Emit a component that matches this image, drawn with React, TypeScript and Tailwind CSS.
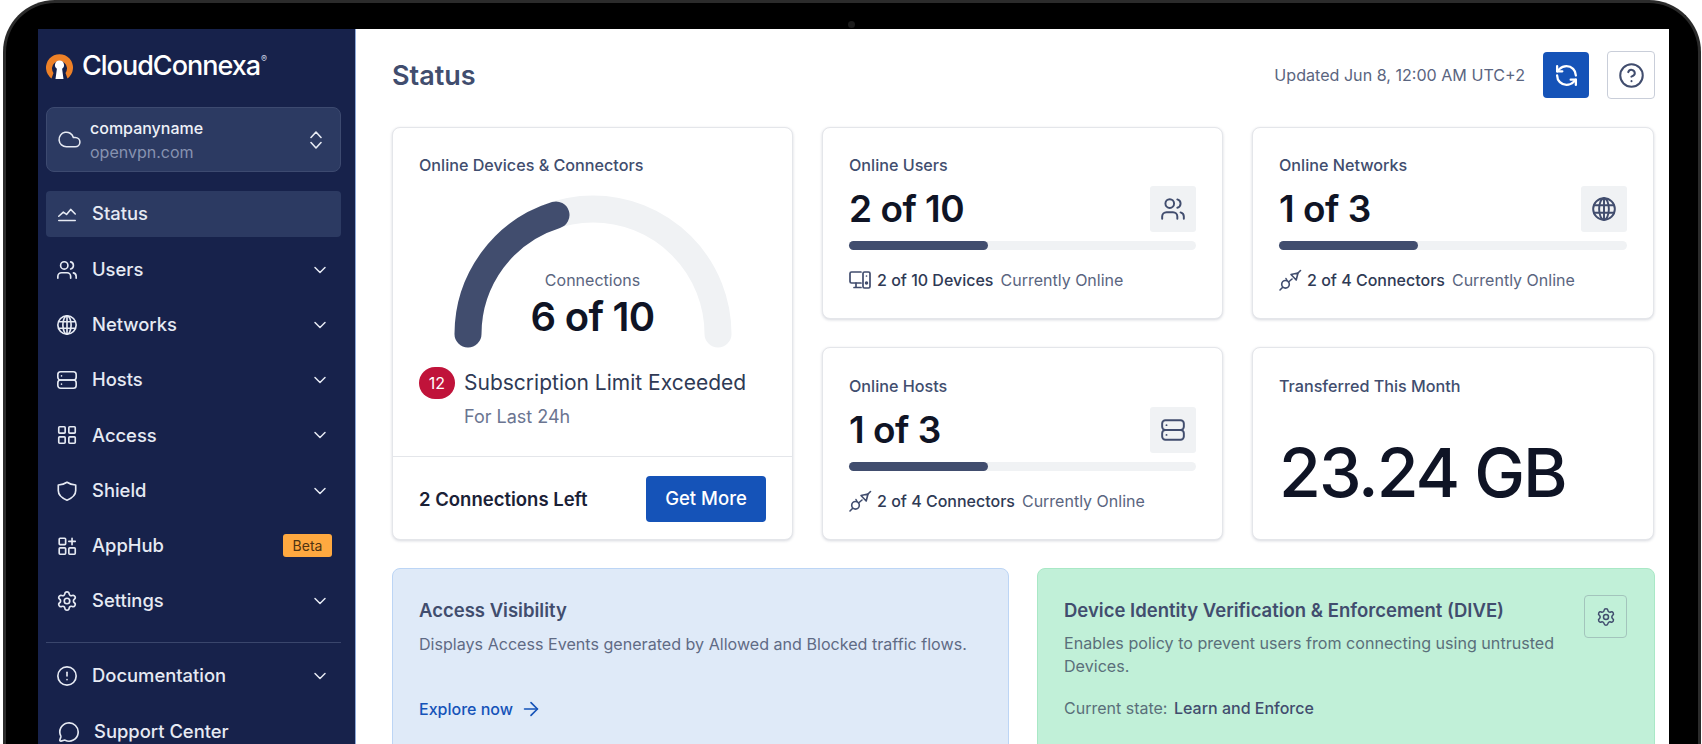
import {
  ArrowRight,
  ChevronDown,
  CircleAlert,
  CircleHelp,
  Cloud,
  LayoutGrid,
  MessageCircle,
  RefreshCcw,
  Settings,
  Users,
} from 'lucide-react';
import type { ComponentType, ReactNode } from 'react';

type IconProps = { size?: number; strokeWidth?: number; className?: string };

function StatusIcon({ size = 24, className }: IconProps) {
  return (
    <svg width={size} height={size} viewBox="0 0 24 24" fill="none" stroke="currentColor" strokeWidth={1.7} strokeLinecap="round" strokeLinejoin="round" className={className}>
      <path d="M3 14.5 8 10l3.5 2.5L16 7l5 5" />
      <path d="M3 19h18" />
    </svg>
  );
}

function AppHubIcon({ size = 24, className }: IconProps) {
  return (
    <svg width={size} height={size} viewBox="0 0 24 24" fill="none" stroke="currentColor" strokeWidth={1.8} strokeLinecap="round" strokeLinejoin="round" className={className}>
      <rect x="3.5" y="3.5" width="7" height="7" rx="1" />
      <rect x="3.5" y="14" width="7" height="7" rx="1" />
      <rect x="14" y="14" width="7" height="7" rx="1" />
      <path d="M17.5 3.5v7M14 7h7" />
    </svg>
  );
}

function HostsIcon({ size = 24, strokeWidth = 1.8, className }: IconProps) {
  return (
    <svg width={size} height={size} viewBox="0 0 24 24" fill="none" stroke="currentColor" strokeWidth={strokeWidth} strokeLinecap="round" strokeLinejoin="round" className={className}>
      <rect x="2" y="3" width="20" height="9" rx="3" />
      <rect x="2" y="12" width="20" height="9" rx="3" />
      <path d="M6 7.500h.01M6 16.500h.01" />
    </svg>
  );
}

function GlobeIcon({ size = 24, strokeWidth = 1.8, className }: IconProps) {
  return (
    <svg width={size} height={size} viewBox="0 0 24 24" fill="none" stroke="currentColor" strokeWidth={strokeWidth} strokeLinecap="round" strokeLinejoin="round" className={className}>
      <circle cx="12" cy="12" r="10" />
      <ellipse cx="12" cy="12" rx="4.500" ry="10" />
      <path d="M12 2v20M3 8.500h18M3 15.500h18" />
    </svg>
  );
}

function ShieldIcon({ size = 24, strokeWidth = 1.8, className }: IconProps) {
  return (
    <svg width={size} height={size} viewBox="0 0 24 24" fill="none" stroke="currentColor" strokeWidth={strokeWidth} strokeLinecap="round" strokeLinejoin="round" className={className}>
      <path d="M12 2.500c2.500 1.800 5.500 2.800 9.500 3v6c0 5.500-4.500 8.500-9.500 10.500-5-2-9.500-5-9.500-10.500v-6c4-.2 7-1.200 9.500-3Z" />
    </svg>
  );
}

function DevicesIcon({ size = 24, className }: IconProps) {
  return (
    <svg width={size} height={size} viewBox="0 0 24 24" fill="none" stroke="currentColor" strokeWidth={1.7} strokeLinecap="round" strokeLinejoin="round" className={className}>
      <path d="M13 15H3.500A1.500 1.500 0 0 1 2 13.500v-8A1.500 1.500 0 0 1 3.500 4H13" />
      <path d="M8 15v4.500h5M6 19.500h7" />
      <rect x="15" y="4" width="7" height="16" rx="1.500" />
      <path d="M18.500 8h.01" />
      <circle cx="18.500" cy="15" r="0.900" fill="currentColor" />
    </svg>
  );
}

function ConnectorIcon({ size = 24, className }: IconProps) {
  return (
    <svg width={size} height={size} viewBox="0 0 24 24" fill="none" stroke="currentColor" strokeWidth={1.6} strokeLinecap="round" strokeLinejoin="round" className={className}>
      <path d="M2 22l2.700-2.700" />
      <circle cx="7.500" cy="16.300" r="3.800" />
      <path d="M10.500 14l3.500-3" />
      <path d="M13 6.500l7-1.500-1.800 7Z" />
      <path d="M20 5l2.500-2.500" />
      <path d="M8 10.500l1 2" />
    </svg>
  );
}

function Logo() {
  return (
    <svg width="29" height="28" viewBox="0 0 29 28" className="-ml-[1px]">
      <path d="M6.500 26.500A13.500 13.500 0 1 1 22.500 26.500L20.500 21A7.500 7.500 0 1 0 8.500 21Z" fill="#ee8127" />
      <path d="M14.500 8.500a4.500 4.500 0 0 1 2.600 8.200l1.400 10.300h-8l1.400-10.300a4.500 4.500 0 0 1 2.600-8.200Z" fill="#ffffff" />
    </svg>
  );
}

type NavItem = {
  label: string;
  icon: ComponentType<IconProps>;
  chevron?: boolean;
  badge?: string;
};

const navItems: NavItem[] = [
  { label: 'Users', icon: Users, chevron: true },
  { label: 'Networks', icon: GlobeIcon, chevron: true },
  { label: 'Hosts', icon: HostsIcon, chevron: true },
  { label: 'Access', icon: LayoutGrid, chevron: true },
  { label: 'Shield', icon: ShieldIcon, chevron: true },
  { label: 'AppHub', icon: AppHubIcon, badge: 'Beta' },
  { label: 'Settings', icon: Settings, chevron: true },
];

function NavRow({ item }: { item: NavItem }) {
  const Icon = item.icon;
  return (
    <div className="flex h-[46px] items-center pl-[10px] pr-[11px] text-[18.4px] font-medium text-[#e6eaf3]">
      <Icon size={22} strokeWidth={1.8} className="shrink-0 text-[#e6eaf3]" />
      <span className="ml-[14px] flex-1">{item.label}</span>
      {item.chevron && <ChevronDown size={20} strokeWidth={1.8} />}
      {item.badge && (
        <span className="mr-[-2px] flex h-[23px] w-[49px] items-center justify-center rounded-[3px] bg-[#ffa940] text-[14px] font-normal text-[#4f3412]">
          {item.badge}
        </span>
      )}
    </div>
  );
}

function Sidebar() {
  return (
    <aside className="flex h-full w-[318px] shrink-0 flex-col border-r border-[#8ea9d8] bg-[#17224b] pl-[8px] pr-[14px]">
      <div className="mt-[21px] flex h-[32px] items-center">
        <Logo />
        <span className="ml-[8px] text-[27px] font-medium tracking-[-1px] text-white">CloudConnexa</span>
        <span className="-mt-[15px] ml-[1px] text-[9px] text-[#cfd5e5]">®</span>
      </div>
      <div className="mt-[25px] flex h-[65px] items-center rounded-lg border border-[#3d4a70] bg-[#2c3a62] pl-[10px] pr-[18px]">
        <Cloud size={25} strokeWidth={1.5} className="text-[#e6eaf3]" />
        <div className="ml-[8px] flex-1 text-[16px] leading-[24px]">
          <div className="font-medium text-[#eef1f8]">companyname</div>
          <div className="text-[#8792b0]">openvpn.com</div>
        </div>
        <svg width="12" height="18" viewBox="0 0 12 18" fill="none" stroke="#e6eaf3" strokeWidth="1.6" strokeLinecap="round" strokeLinejoin="round">
          <path d="M1 6.500 6 1l5 5.500" />
          <path d="M1 11.500 6 17l5-5.500" />
        </svg>
      </div>
      <div className="mt-[19px] flex h-[46px] items-center rounded bg-[#2c3a62] pl-[10px] text-[18.4px] font-medium text-[#e6eaf3]">
        <StatusIcon size={22} />
        <span className="ml-[14px]">Status</span>
      </div>
      <div className="mt-[9.5px] flex flex-col gap-[9.3px]">
        {navItems.map((item) => (
          <NavRow key={item.label} item={item} />
        ))}
      </div>
      <div className="mt-[17.5px] border-t border-[#3a466c]" />
      <div className="mt-[10px]">
        <NavRow item={{ label: 'Documentation', icon: CircleAlert, chevron: true }} />
      </div>
      <div className="mt-[10px] flex h-[46px] items-center pl-[12px] text-[18.4px] font-medium text-[#e6eaf3]">
        <MessageCircle size={22} strokeWidth={1.8} />
        <span className="ml-[14px]">Support Center</span>
      </div>
    </aside>
  );
}

function Card({ className, children }: { className?: string; children: ReactNode }) {
  return (
    <div className={`rounded-lg border border-[#e4e6ea] bg-white shadow-[0_1px_3px_rgba(30,40,70,0.18)] ${className ?? ''}`}>
      {children}
    </div>
  );
}

type StatProps = {
  label: string;
  value: string;
  icon: ComponentType<IconProps>;
  subIcon: ComponentType<IconProps>;
  subStrong: string;
  className: string;
};

function StatCard({ label, value, icon: Icon, subIcon: SubIcon, subStrong, className }: StatProps) {
  return (
    <Card className={`px-[26px] ${className}`}>
      <div className="text-[16.15px] font-medium leading-[24px] text-[#414d6e]">{label}</div>
      <div className="mt-[9px] flex h-[46px] items-center justify-between">
        <span className="text-[37px] font-semibold tracking-[-0.5px] text-[#0f1425]">{value}</span>
        <span className="flex h-[46px] w-[46px] items-center justify-center rounded-[3px] bg-[#f0f2f4]">
          <Icon size={26} strokeWidth={1.8} className="text-[#414d6e]" />
        </span>
      </div>
      <div className="mt-[9px] h-[9px] rounded-full bg-[#f0f2f4]">
        <div className="h-full w-[40%] rounded-full bg-[#414d6e]" />
      </div>
      <div className="mt-[18px] flex h-[24px] items-center text-[16px] text-[#5a6580]">
        <SubIcon size={24} className="-mx-[1px] shrink-0 text-[#414d6e]" />
        <span className="ml-[6px] font-medium text-[#2f3a55]">{subStrong}</span>
        <span className="ml-[7px]">Currently Online</span>
      </div>
    </Card>
  );
}

function Gauge() {
  return (
    <svg width="278" height="153" viewBox="0 0 278 153" className="block">
      <path d="M14 139A125 125 0 0 1 264 139" fill="none" stroke="#f0f2f4" strokeWidth="27" strokeLinecap="round" />
      <path d="M14 139A125 125 0 0 1 102 20" fill="none" stroke="#414d6e" strokeWidth="27" strokeLinecap="round" />
    </svg>
  );
}

function ConnectionsCard() {
  return (
    <Card className="row-span-2 flex flex-col">
      <div className="flex-1 px-[26px] pt-[25px]">
        <div className="text-[16.15px] font-medium leading-[24px] text-[#414d6e]">Online Devices &amp; Connectors</div>
        <div className="relative mx-auto mt-[18px] w-[278px]">
          <Gauge />
          <div className="absolute inset-x-0 top-[73px] text-center">
            <div className="text-[16px] leading-[24px] text-[#5a6580]">Connections</div>
            <div className="text-[40px] font-semibold leading-[50px] tracking-[-0.7px] text-[#0f1425]">6 of 10</div>
          </div>
        </div>
        <div className="mt-[19px] flex items-center">
          <span className="flex h-[32px] w-[36px] items-center justify-center rounded-full bg-[#c0133a] text-[16px] text-white">12</span>
          <span className="ml-[9px] text-[21px] leading-[32px] text-[#2f3a55]">Subscription Limit Exceeded</span>
        </div>
        <div className="ml-[45px] mt-[2px] text-[18px] leading-[32px] text-[#6b7591]">For Last 24h</div>
      </div>
      <div className="flex h-[83px] items-center justify-between border-t border-[#e4e6ea] px-[26px] pt-[2px]">
        <span className="mt-[2px] text-[18.5px] font-semibold text-[#1a2136]">2 Connections Left</span>
        <span className="flex h-[46px] w-[120px] items-center justify-center rounded bg-[#1553b8] text-[18.5px] font-medium text-white">Get More</span>
      </div>
    </Card>
  );
}

export default function App() {
  return (
    <div className="h-[744px] w-[1702px] overflow-hidden bg-white pl-[3px] font-['Inter',sans-serif]">
      <div className="relative h-[800px] w-[1698px] rounded-t-[52px] border-[3px] border-b-0 border-[#2b2b2b] bg-black pl-[32px] pt-[26px]">
        <span className="absolute left-[842px] top-[18px] h-[7px] w-[7px] rounded-full bg-[#1c1c1c]" />
        <div className="flex h-[780px] w-[1631px]">
          <Sidebar />
          <main className="flex-1 bg-white pl-[36px] pr-[14px]">
            <header className="flex h-[98px] items-start justify-between">
              <h1 className="mt-[27px] text-[27px] font-semibold leading-[40px] text-[#414d6e]">Status</h1>
              <div className="mt-[22px] flex items-center">
                <span className="text-[16.1px] text-[#5a6580]">Updated Jun 8, 12:00 AM UTC+2</span>
                <span className="ml-[18px] flex h-[46px] w-[46px] items-center justify-center rounded bg-[#1553b8]">
                  <RefreshCcw size={25} strokeWidth={2.2} className="text-white" />
                </span>
                <span className="ml-[18px] flex h-[48px] w-[48px] items-center justify-center rounded border border-[#c9ced9]">
                  <CircleHelp size={27} strokeWidth={1.8} className="text-[#414d6e]" />
                </span>
              </div>
            </header>
            <div className="grid grid-cols-[401px_401px_402px] grid-rows-[192px_193px] gap-x-[29px] gap-y-[28px]">
              <ConnectionsCard />
              <StatCard label="Online Users" value="2 of 10" icon={Users} subIcon={DevicesIcon} subStrong="2 of 10 Devices" className="pt-[25px]" />
              <StatCard label="Online Networks" value="1 of 3" icon={GlobeIcon} subIcon={ConnectorIcon} subStrong="2 of 4 Connectors" className="pt-[25px]" />
              <StatCard label="Online Hosts" value="1 of 3" icon={HostsIcon} subIcon={ConnectorIcon} subStrong="2 of 4 Connectors" className="pt-[26px]" />
              <Card className="px-[26px] pt-[26px]">
                <div className="text-[16.15px] font-medium leading-[24px] text-[#414d6e]">Transferred This Month</div>
                <div className="mt-[29px] text-[68px] font-medium leading-[90px] tracking-[-2px] text-[#0f1425]">23.24 GB</div>
              </Card>
            </div>
            <div className="mt-[28px] grid grid-cols-[617px_618px] gap-x-[28px]">
              <div className="h-[220px] rounded-lg border border-[#bcd5f5] bg-[#dfeaf8] px-[26px] pt-[27px]">
                <div className="text-[18.5px] font-semibold leading-[28px] text-[#414d6e]">Access Visibility</div>
                <div className="mt-[8px] text-[16.1px] leading-[24px] text-[#5f6b85]">Displays Access Events generated by Allowed and Blocked traffic flows.</div>
                <div className="mt-[41px] flex items-center text-[16px] font-medium leading-[24px] text-[#1553b8]">
                  Explore now
                  <ArrowRight size={22} strokeWidth={1.8} className="ml-[7px]" />
                </div>
              </div>
              <div className="relative h-[220px] rounded-lg border border-[#a9e8c6] bg-[#c1f0d8] px-[26px] pt-[27px]">
                <div className="text-[18.5px] font-semibold leading-[28px] text-[#414d6e]">Device Identity Verification &amp; Enforcement (DIVE)</div>
                <div className="mt-[8px] w-[500px] text-[16.1px] leading-[23px] text-[#5a6f7a]">Enables policy to prevent users from connecting using untrusted Devices.</div>
                <div className="mt-[18px] text-[16px] leading-[24px] text-[#5a6f7a]">
                  Current state: <span className="ml-[2px] font-medium text-[#414d6e]">Learn and Enforce</span>
                </div>
                <span className="absolute right-[27px] top-[26px] flex h-[43px] w-[43px] items-center justify-center rounded border border-[#a3c4bc]">
                  <Settings size={20} strokeWidth={1.8} className="text-[#414d6e]" />
                </span>
              </div>
            </div>
          </main>
        </div>
      </div>
    </div>
  );
}
